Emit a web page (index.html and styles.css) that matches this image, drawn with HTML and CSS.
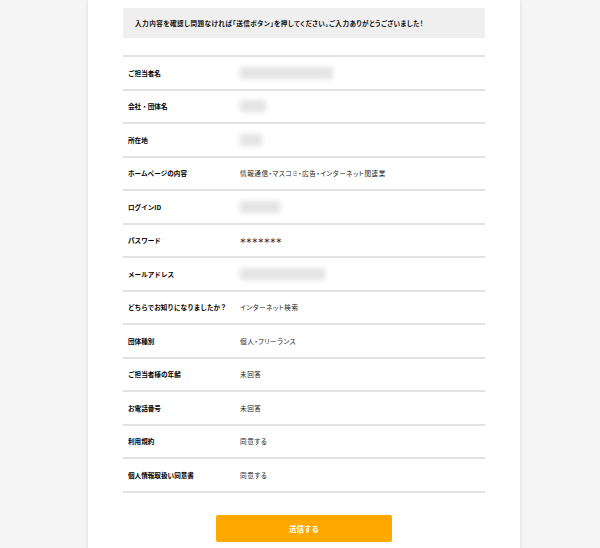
FILE: index.html
```html
<!DOCTYPE html>
<html lang="ja">
<head>
    <meta charset="UTF-8">
    <meta name="viewport" content="width=device-width, initial-scale=1.0">
    <title>入力内容の確認</title>
    <link rel="stylesheet" href="styles.css">
</head>
<body>

<div class="container">
    <p class="notice">入力内容を確認し問題なければ「送信ボタン」を押してください。ご入力ありがとうございました！</p>

    <dl class="confirm">
        <div class="row"><dt>ご担当者名</dt><dd><span class="masked w93"></span></dd></div>
        <div class="row"><dt>会社・団体名</dt><dd><span class="masked w26"></span></dd></div>
        <div class="row"><dt>所在地</dt><dd><span class="masked w22"></span></dd></div>
        <div class="row"><dt>ホームページの内容</dt><dd>情報通信・マスコミ・広告・インターネット関連業</dd></div>
        <div class="row"><dt>ログインID</dt><dd><span class="masked w40"></span></dd></div>
        <div class="row"><dt>パスワード</dt><dd class="stars">＊＊＊＊＊＊＊</dd></div>
        <div class="row"><dt>メールアドレス</dt><dd><span class="masked w85"></span></dd></div>
        <div class="row"><dt>どちらでお知りになりましたか？</dt><dd>インターネット検索</dd></div>
        <div class="row"><dt>団体種別</dt><dd>個人・フリーランス</dd></div>
        <div class="row"><dt>ご担当者様の年齢</dt><dd>未回答</dd></div>
        <div class="row"><dt>お電話番号</dt><dd>未回答</dd></div>
        <div class="row"><dt>利用規約</dt><dd>同意する</dd></div>
        <div class="row"><dt>個人情報取扱い同意書</dt><dd>同意する</dd></div>
    </dl>

    <div class="actions">
        <button type="submit" class="submit">送信する</button>
    </div>
</div>

</body>
</html>
```

FILE: styles.css
```css
body {
    margin: 0;
    font-family: "Noto Sans CJK JP", "Noto Sans", sans-serif;
    background-color: #f5f5f5;
    color: #111;
}
.container {
    width: 362px;
    margin: 0 auto 0 88px;
    padding: 8px 35px 20px;
    background-color: #fff;
    box-shadow: 0 0 4px rgba(0, 0, 0, 0.12);
}
.notice {
    margin: 0;
    height: 30px;
    display: flex;
    align-items: center;
    padding-left: 12px;
    background-color: #efefef;
    font-size: 6.6px;
    font-weight: bold;
    font-feature-settings: "palt";
    letter-spacing: 0.47px;
}
.confirm {
    margin: 17px 0 0;
    border-bottom: 2px solid #e2e2e2;
}
.row {
    display: grid;
    grid-template-columns: 117px 1fr;
    align-items: center;
    height: 31.5px;
    border-top: 2px solid #e2e2e2;
}
dt {
    padding-left: 5px;
    font-size: 6.6px;
    font-weight: bold;
    color: #000;
}
dd {
    margin: 0;
    font-size: 6.6px;
    color: #222;
    font-feature-settings: "palt";
    letter-spacing: 0.55px;
}
.stars {
    letter-spacing: 0.6px;
    font-weight: bold;
}
.masked {
    display: block;
    height: 12px;
    background-color: #e4e4e4;
    filter: blur(2.5px);
}
.w93 { width: 93px; }
.w26 { width: 26px; }
.w22 { width: 22px; }
.w40 { width: 40px; }
.w85 { width: 85px; }
.actions {
    display: flex;
    justify-content: center;
    margin-top: 22px;
}
.submit {
    width: 176px;
    height: 27px;
    border: none;
    border-radius: 2px;
    background-color: #ffa800;
    color: #fff;
    font-family: inherit;
    font-size: 7.5px;
    font-weight: bold;
    cursor: pointer;
}
```
